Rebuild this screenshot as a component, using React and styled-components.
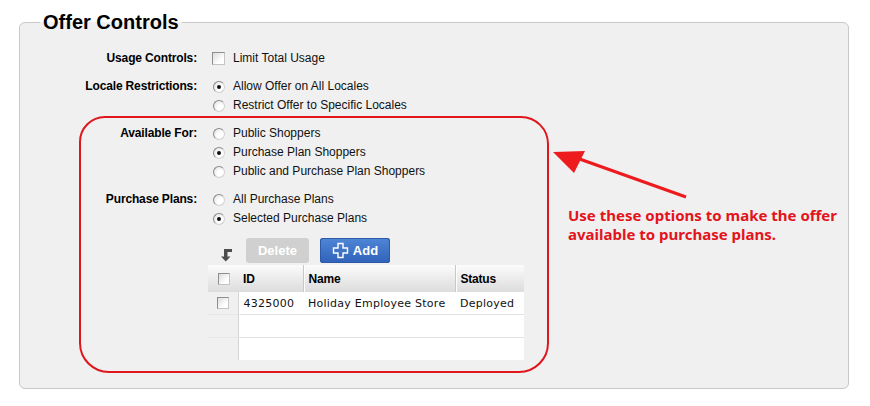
import React from "react";
import styled, { createGlobalStyle } from "styled-components";

const GlobalStyle = createGlobalStyle`
  html, body {
    margin: 0;
    padding: 0;
    background: #fff;
  }
  body {
    font-family: "Liberation Sans", Arial, sans-serif;
    font-size: 12px;
    color: #000;
  }
`;

const Page = styled.div`
  position: relative;
  width: 870px;
  height: 406px;
  padding: 11px 0 0 19px;
  box-sizing: border-box;
`;

//Panel
const Panel = styled.fieldset`
  width: 830px;
  height: 378px;
  box-sizing: border-box;
  margin: 0;
  padding: 16px 0 0 0;
  border: 1px solid #c9c9c9;
  border-radius: 6px;
  background: #f0f0f0;
  min-inline-size: 0;
`;

const Legend = styled.legend`
  margin-left: 20px;
  padding: 0 3px;
  font-size: 20px;
  line-height: 22px;
  font-weight: 700;
  color: #000;
`;

const Form = styled.div`
  display: flex;
  flex-direction: column;
  gap: 9px;
`;

const Row = styled.div`
  display: grid;
  grid-template-columns: 177px 1fr;
  column-gap: 15px;
`;

const Label = styled.div`
  text-align: right;
  font-weight: 700;
  line-height: 19px;
  letter-spacing: -0.15px;
`;

const Options = styled.div`
  display: flex;
  flex-direction: column;
`;

const Option = styled.label`
  display: flex;
  align-items: center;
  height: 19px;
  line-height: 19px;
  color: #111;
`;

const Check = styled.span`
  display: inline-block;
  box-sizing: border-box;
  width: ${(p) => p.$size || 12}px;
  height: ${(p) => p.$size || 12}px;
  border: 1px solid #8e8e8e;
  border-right-color: #c4c4c4;
  border-bottom-color: #c4c4c4;
  background: linear-gradient(135deg, #dcdcdc 0%, #fff 70%);
  margin-right: ${(p) => (p.$gap === undefined ? 8 : p.$gap)}px;
  flex: none;
`;

const Radio = styled.span`
  position: relative;
  display: inline-block;
  box-sizing: border-box;
  width: 12px;
  height: 12px;
  margin: 0 8px 0 1px;
  border-radius: 50%;
  border: 1px solid #8a8a8a;
  border-right-color: #d2d2d2;
  border-bottom-color: #d2d2d2;
  background: radial-gradient(circle at 65% 65%, #fff 30%, #dcdcdc 100%);
  flex: none;
  &::after {
    content: "";
    display: ${(p) => (p.$on ? "block" : "none")};
    position: absolute;
    left: 3px;
    top: 3px;
    width: 4px;
    height: 4px;
    border-radius: 50%;
    background: #111;
  }
`;

//Toolbar + grid
const PlanBlock = styled.div`
  margin: 10px 0 0 188px;
  width: 316px;
`;

const Toolbar = styled.div`
  display: flex;
  align-items: center;
  height: 25px;
  margin-bottom: 2px;
`;

const ArrowSlot = styled.div`
  width: 38px;
  display: flex;
  justify-content: flex-start;
  padding-left: 13px;
  box-sizing: border-box;
  padding-top: 8px;
`;

const Btn = styled.button`
  display: flex;
  align-items: center;
  justify-content: center;
  gap: 4px;
  height: 25px;
  width: ${(p) => p.$w}px;
  margin-right: 11px;
  padding: 0;
  border: none;
  border-radius: 3px;
  font-family: "Liberation Sans", Arial, sans-serif;
  font-size: 13px;
  font-weight: 700;
  color: #fff;
  background: ${(p) =>
    p.$primary
      ? "linear-gradient(#4f86d6, #2f62b9)"
      : "#d0d0d0"};
  box-shadow: ${(p) => (p.$primary ? "inset 0 0 0 1px #2d5aa6" : "none")};
`;

const Table = styled.table`
  width: 316px;
  border-collapse: collapse;
  table-layout: fixed;
`;

const Th = styled.th`
  height: 27px;
  padding: 0 0 0 5px;
  text-align: left;
  font-size: 12px;
  font-weight: 700;
  background: linear-gradient(#fbfbfb, #dcdcdc);
  border-left: ${(p) => (p.$first ? "none" : "1px solid #c8c8c8")};
  box-shadow: ${(p) => (p.$first ? "none" : "inset 1px 0 0 #fff")};
  letter-spacing: -0.2px;
`;

const CheckCell = styled.td`
  width: 30px;
  padding: 0;
  background: ${(p) => (p.$head ? "linear-gradient(#fbfbfb, #dcdcdc)" : "transparent")};
  border-bottom: ${(p) => (p.$line ? "1px solid #e6e6e6" : "none")};
  vertical-align: middle;
  text-align: center;
`;

const CellBox = styled.div`
  display: flex;
  justify-content: center;
  padding-left: 1px;
`;

const Td = styled.td`
  height: 22px;
  padding: 0 0 0 5px;
  background: #fff;
  font-family: "DejaVu Sans", Verdana, sans-serif;
  font-size: 11px;
  letter-spacing: 0.25px;
  color: #111;
  white-space: nowrap;
  overflow: hidden;
  border-bottom: ${(p) => (p.$last ? "none" : "1px solid #e2e2e2")};
  border-left: ${(p) => (p.$edge ? "1px solid #d4d4d4" : "none")};
`;

//Annotation overlay
const Callout = styled.div`
  position: absolute;
  left: 79px;
  top: 116px;
  width: 470px;
  height: 257px;
  box-sizing: border-box;
  border: 2px solid #e0161c;
  border-radius: 26px 28px 30px 30px;
  pointer-events: none;
`;

const Pointer = styled.svg`
  position: absolute;
  left: 550px;
  top: 146px;
  overflow: visible;
`;

const Note = styled.div`
  position: absolute;
  left: 568px;
  top: 206px;
  font-family: "Noto Sans", "Open Sans", sans-serif;
  font-size: 15px;
  line-height: 19px;
  font-weight: 700;
  color: #e3141b;
`;

const options = [
  {
    label: "Usage Controls:",
    type: "check",
    items: [{ text: "Limit Total Usage" }],
  },
  {
    label: "Locale Restrictions:",
    items: [
      { text: "Allow Offer on All Locales", on: true },
      { text: "Restrict Offer to Specific Locales" },
    ],
  },
  {
    label: "Available For:",
    items: [
      { text: "Public Shoppers" },
      { text: "Purchase Plan Shoppers", on: true },
      { text: "Public and Purchase Plan Shoppers" },
    ],
  },
  {
    label: "Purchase Plans:",
    items: [
      { text: "All Purchase Plans" },
      { text: "Selected Purchase Plans", on: true },
    ],
  },
];

const rows = [
  { id: "4325000", name: "Holiday Employee Store", status: "Deployed" },
  null,
  null,
];

function DownArrow() {
  return (
    <svg width="12" height="14" viewBox="0 0 12 14">
      <path d="M3 1 H11 V4 H6.5 V8.5 H9.5 L4.75 13.5 L0 8.5 H3 Z" fill="#4d4d4d" />
    </svg>
  );
}

function PlusIcon() {
  return (
    <svg width="17" height="17" viewBox="0 0 17 17">
      <path
        d="M6 1.5 H11 V6 H15.5 V11 H11 V15.5 H6 V11 H1.5 V6 H6 Z"
        fill="none"
        stroke="#fff"
        strokeWidth="1.4"
      />
    </svg>
  );
}

export default function App() {
  return (
    <>
      <GlobalStyle />
      <Page>
        <Panel>
          <Legend>Offer Controls</Legend>
          <Form>
            {options.map((g) => (
              <Row key={g.label}>
                <Label>{g.label}</Label>
                <Options>
                  {g.items.map((it) => (
                    <Option key={it.text}>
                      {g.type === "check" ? <Check $size={13} /> : <Radio $on={it.on} />}
                      {it.text}
                    </Option>
                  ))}
                </Options>
              </Row>
            ))}
          </Form>
          <PlanBlock>
            <Toolbar>
              <ArrowSlot>
                <DownArrow />
              </ArrowSlot>
              <Btn $w={63}>Delete</Btn>
              <Btn $w={70} $primary>
                <PlusIcon />
                Add
              </Btn>
            </Toolbar>
            <Table>
              <colgroup>
                <col style={{ width: 30 }} />
                <col style={{ width: 65 }} />
                <col style={{ width: 152 }} />
                <col style={{ width: 69 }} />
              </colgroup>
              <thead>
                <tr>
                  <CheckCell $head>
                    <CellBox>
                      <Check $gap={0} />
                    </CellBox>
                  </CheckCell>
                  <Th $first>ID</Th>
                  <Th>Name</Th>
                  <Th>Status</Th>
                </tr>
              </thead>
              <tbody>
                {rows.map((r, i) => (
                  <tr key={i}>
                    <CheckCell $line={i < rows.length - 1}>
                      {r && (
                        <CellBox>
                          <Check $gap={0} />
                        </CellBox>
                      )}
                    </CheckCell>
                    <Td $edge $last={i === rows.length - 1}>{r ? r.id : ""}</Td>
                    <Td $last={i === rows.length - 1}>{r ? r.name : ""}</Td>
                    <Td $last={i === rows.length - 1}>{r ? r.status : ""}</Td>
                  </tr>
                ))}
              </tbody>
            </Table>
          </PlanBlock>
        </Panel>

        <Callout />
        <Pointer width="140" height="56" viewBox="0 0 140 56">
          <line x1="24" y1="11" x2="136" y2="51" stroke="#ee1b1e" strokeWidth="3.2" />
          <path d="M3 6 L35 5 L24 27 Z" fill="#ee1b1e" />
        </Pointer>
        <Note>
          Use these options to make the offer
          <br />
          available to purchase plans.
        </Note>
      </Page>
    </>
  );
}
